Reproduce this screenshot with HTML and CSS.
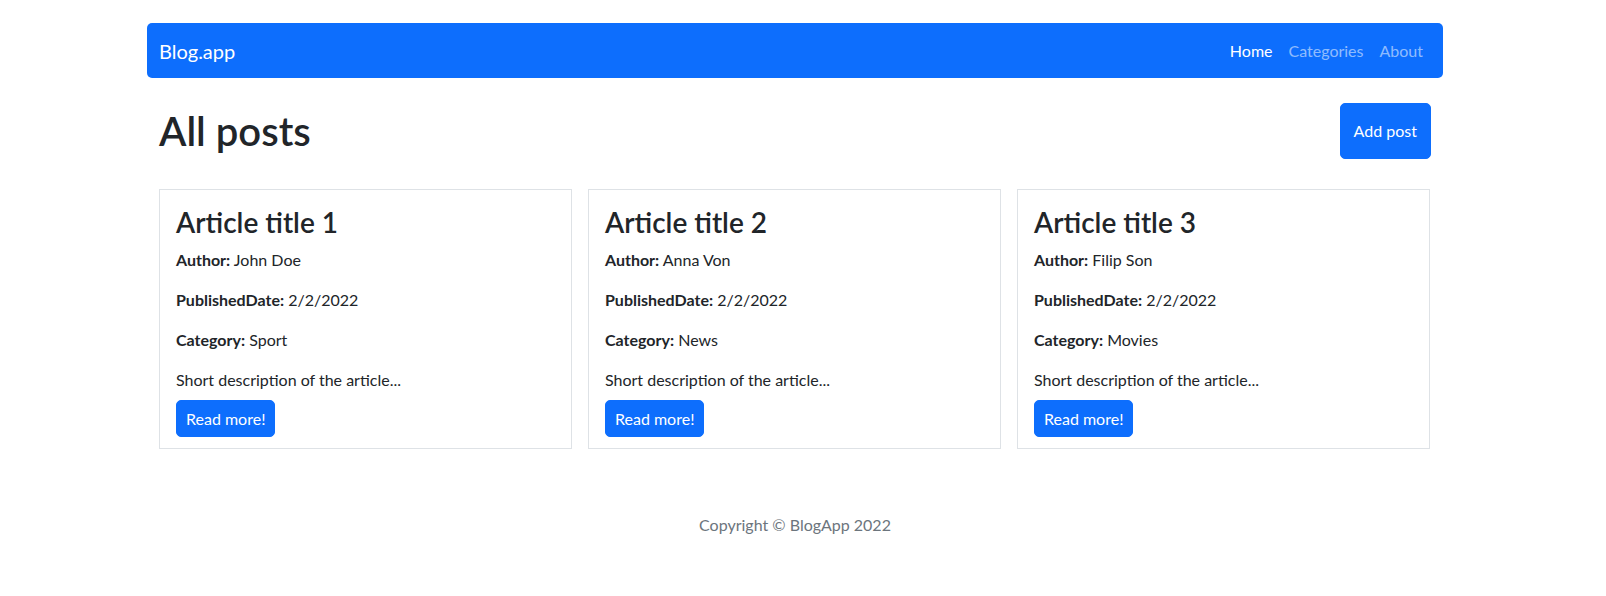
FILE: index.html
```html
<!DOCTYPE html>
<html lang="en">
<head>
<meta charset="utf-8">
<title>Blog.app</title>
<link rel="stylesheet" href="styles.css">
</head>
<body>
<div class="page">
  <div class="container">
    <nav class="navbar">
      <a class="brand" href="#">Blog.app</a>
      <ul class="nav">
        <li><a class="nav-link active" href="#">Home</a></li>
        <li><a class="nav-link" href="#">Categories</a></li>
        <li><a class="nav-link" href="#">About</a></li>
      </ul>
    </nav>
    <main class="main">
      <div class="head-row">
        <h1 class="title">All posts</h1>
        <button class="btn btn-add">Add post</button>
      </div>
      <div class="cards">
        <div class="card">
          <h3 class="card-title">Article title 1</h3>
          <p><b>Author:</b> John Doe</p>
          <p><b>PublishedDate:</b> 2/2/2022</p>
          <p><b>Category:</b> Sport</p>
          <p class="desc">Short description of the article...</p>
          <a class="btn btn-read" href="#">Read more!</a>
        </div>
        <div class="card">
          <h3 class="card-title">Article title 2</h3>
          <p><b>Author:</b> Anna Von</p>
          <p><b>PublishedDate:</b> 2/2/2022</p>
          <p><b>Category:</b> News</p>
          <p class="desc">Short description of the article...</p>
          <a class="btn btn-read" href="#">Read more!</a>
        </div>
        <div class="card">
          <h3 class="card-title">Article title 3</h3>
          <p><b>Author:</b> Filip Son</p>
          <p><b>PublishedDate:</b> 2/2/2022</p>
          <p><b>Category:</b> Movies</p>
          <p class="desc">Short description of the article...</p>
          <a class="btn btn-read" href="#">Read more!</a>
        </div>
      </div>
    </main>
    <footer class="footer">Copyright © BlogApp 2022</footer>
  </div>
</div>
</body>
</html>
```
FILE: styles.css
```css
* { box-sizing: border-box; }
html, body { margin: 0; padding: 0; background: #fff; }
body {
  font-family: Lato, "Open Sans", "Liberation Sans", sans-serif;
  font-size: 16px;
  line-height: 24px;
  color: #212529;
}
.page { padding-right: 16px; }
.container { width: 1296px; margin: 0 auto; padding-top: 23px; }

.navbar {
  background: #0d6efd;
  border-radius: 5px;
  height: 55px;
  display: flex;
  align-items: center;
  justify-content: space-between;
  padding: 0 12px;
}
.brand {
  color: #fff;
  text-decoration: none;
  font-size: 20px;
  line-height: 30px;
  margin-top: 1px;
}
.nav { list-style: none; margin: 0; padding: 0; display: flex; margin-top: 1px; }
.nav-link {
  display: block;
  padding: 8px 8px;
  color: rgba(255,255,255,0.55);
  text-decoration: none;
}
.nav-link.active { color: #fff; }

.main { padding: 0 12px; }
.head-row {
  display: flex;
  justify-content: space-between;
  align-items: center;
  margin-top: 25px;
  margin-bottom: 30px;
}
.title {
  margin: 0;
  font-size: 40px;
  font-weight: 600;
  line-height: 48px;
}
.btn {
  background: #0d6efd;
  color: #fff;
  border: 1px solid #0d6efd;
  border-radius: 5px;
  font-family: inherit;
  font-size: 16px;
  line-height: 24px;
  text-decoration: none;
  display: inline-block;
}
.btn-add { padding: 15px 13px; height: 56px; }

.cards {
  display: grid;
  grid-template-columns: repeat(3, 413px);
  column-gap: 16px;
}
.card {
  border: 1px solid #dee2e6;
  padding: 16px 16px 11px;
}
.card-title {
  margin: 0 0 8px;
  font-size: 28px;
  font-weight: 600;
  line-height: 33.6px;
}
.card p { margin: 0 0 16px; }
.card p.desc { margin-bottom: 8px; }
.card b { font-weight: 700; }
.btn-read { padding: 6px 9px; line-height: 23px; }

.footer {
  text-align: center;
  color: #6c757d;
  margin-top: 64px;
  line-height: 24px;
}
```
